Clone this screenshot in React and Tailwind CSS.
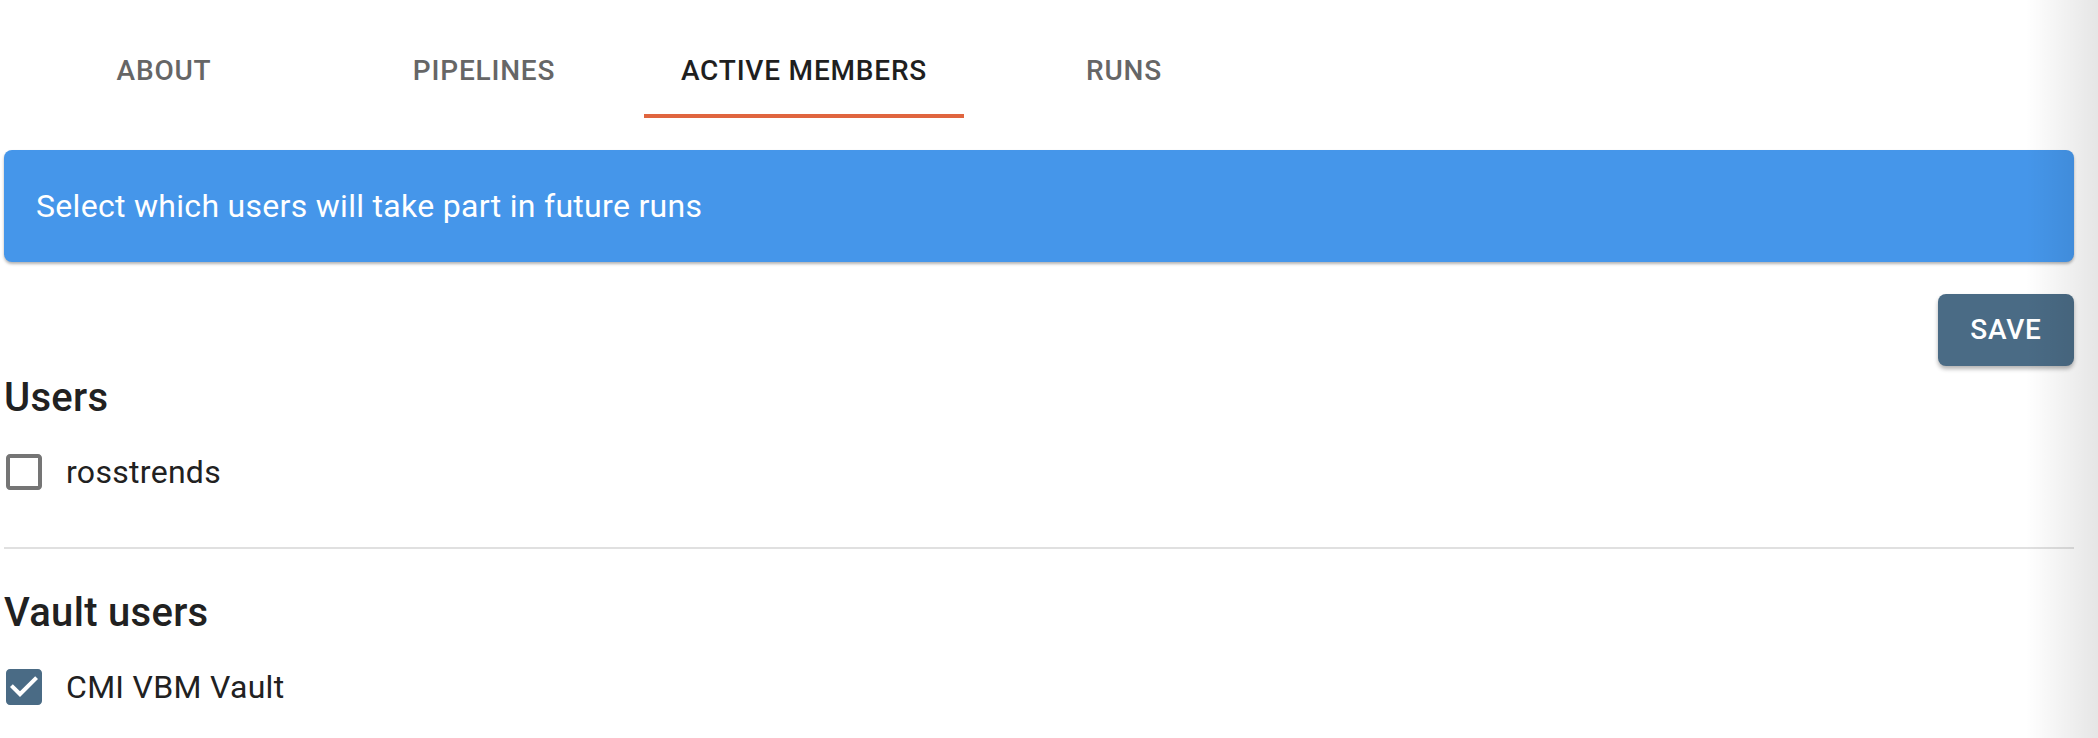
import React from "react";

function Tab({ label, active }) {
  return (
    <div
      className={
        "relative w-[320px] h-[96px] flex items-center justify-center pt-[2px] text-[28px] font-medium uppercase tracking-[0.8px] " +
        (active ? "text-[#1f1f1f]" : "text-[#666666]")
      }
    >
      {label}
      {active && <span className="absolute left-0 right-0 bottom-0 h-[4px] bg-[#e0653f]" />}
    </div>
  );
}

function CheckBoxIcon({ checked }) {
  return (
    <svg width="48" height="48" viewBox="0 0 24 24" className="shrink-0">
      {checked ? (
        <path
          fill="#4a6b85"
          d="M19 3H5c-1.11 0-2 .9-2 2v14c0 1.1.89 2 2 2h14c1.11 0 2-.9 2-2V5c0-1.1-.89-2-2-2zm-9 14l-5-5 1.41-1.41L10 14.170l7.59-7.59L19 8l-9 9z"
        />
      ) : (
        <path
          fill="#757575"
          d="M19 5v14H5V5h14m0-2H5c-1.1 0-2 .9-2 2v14c0 1.1.9 2 2 2h14c1.1 0 2-.9 2-2V5c0-1.1-.9-2-2-2z"
        />
      )}
    </svg>
  );
}

function Row({ label, checked }) {
  return (
    <div className="h-[84px] flex items-center ml-[-4px]">
      <CheckBoxIcon checked={checked} />
      <span className="ml-[18px] text-[32px] text-[#212121] tracking-[0.3px]">{label}</span>
    </div>
  );
}

export default function App() {
  return (
    <div
      className="relative min-h-screen bg-white overflow-hidden"
      style={{ fontFamily: "Roboto, 'Liberation Sans', sans-serif" }}
    >
      <div className="pl-[4px] pr-[24px]">
        <div className="flex mt-[22px]">
          <Tab label="About" />
          <Tab label="Pipelines" />
          <Tab label="Active Members" active />
          <Tab label="Runs" />
        </div>

        <div className="mt-[32px] h-[112px] rounded-[8px] bg-[#4596ea] px-[32px] flex items-center text-[32px] text-white tracking-[0.3px] shadow-[0_2px_3px_rgba(0,0,0,0.3)]">
          Select which users will take part in future runs
        </div>

        <div className="mt-[32px] flex justify-end">
          <button className="h-[72px] w-[136px] rounded-[8px] bg-[#4a6b85] text-white text-[28px] font-medium uppercase tracking-[0.8px] shadow-[0_3px_4px_rgba(0,0,0,0.3)]">
            Save
          </button>
        </div>

        <h2 className="text-[40px] leading-[64px] font-medium text-[#212121] tracking-[0.3px]">Users</h2>
        <Row label="rosstrends" />

        <div className="mt-[33px] h-[2px] bg-[#e0e0e0]" />

        <h2 className="mt-[32px] text-[40px] leading-[64px] font-medium text-[#212121] tracking-[0.3px]">
          Vault users
        </h2>
        <Row label="CMI VBM Vault" checked />
      </div>

      <div className="pointer-events-none absolute top-0 right-0 h-full w-[72px] bg-linear-to-r from-black/0 to-black/10" />
    </div>
  );
}
